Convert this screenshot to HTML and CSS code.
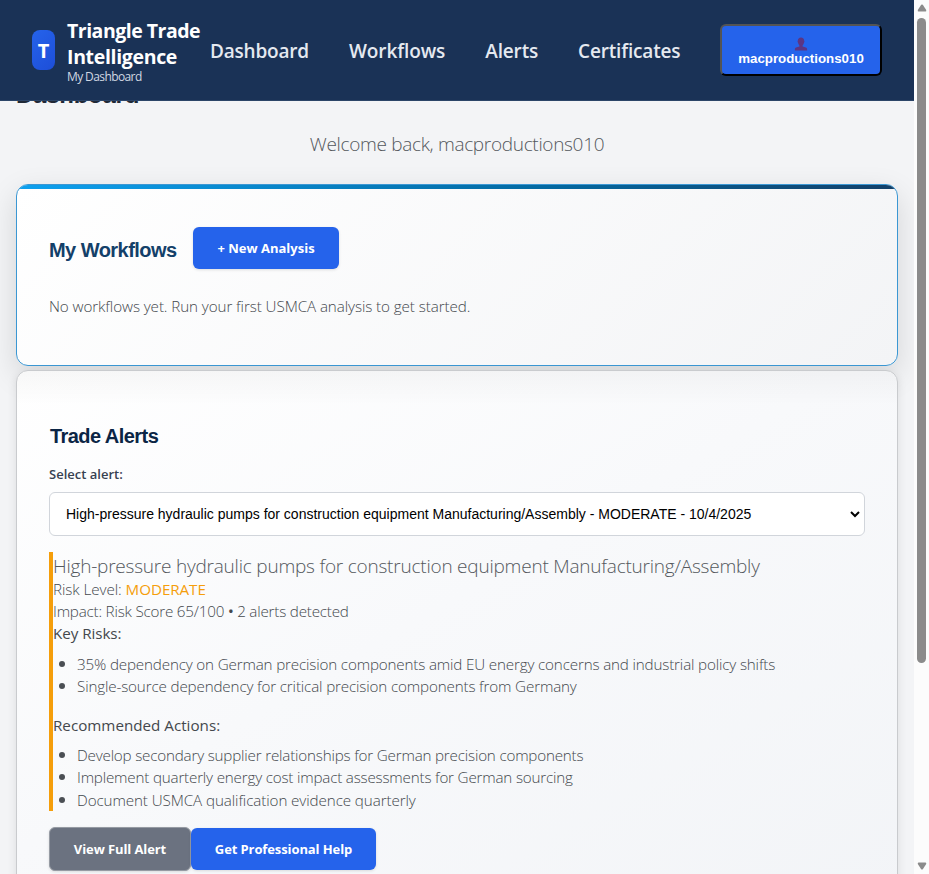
FILE: index.html
```html
<!DOCTYPE html>
<html lang="en">
<head>
<meta charset="utf-8">
<title>Triangle Trade Intelligence</title>
<link rel="stylesheet" href="styles.css">
</head>
<body>
<div class="viewport">
  <div class="page">
    <header class="header">
      <div class="logo">T</div>
      <div class="brand">
        <div class="brand-name"><span class="brand-first">Triangle Trade</span><br><span class="brand-second">Intelligence</span></div>
        <div class="brand-sub">My Dashboard</div>
      </div>
      <nav class="nav">
        <a class="nav-dashboard">Dashboard</a>
        <a class="nav-workflows">Workflows</a>
        <a class="nav-alerts">Alerts</a>
        <a class="nav-certificates">Certificates</a>
      </nav>
      <button class="user">
        <svg class="user-icon" width="14" height="14" viewBox="0 0 14 14"><path d="M7 .5c2 0 3.200 1.300 3.200 3.300l.3.800-.5 1.200C9.700 7 9.300 7.800 8.600 8.400v1.100l3.300 1c.9.300 1.200.9 1.200 1.700v1.300H.9v-1.300c0-.8.300-1.400 1.200-1.700l3.300-1V8.400C4.700 7.800 4.300 7 4 5.800l-.5-1.200.3-.8C3.800 1.800 5 .5 7 .5z" fill="#5c3584"/></svg>
        <span>macproductions010</span>
      </button>
    </header>
    <main class="main">
      <h1 class="title">Dashboard</h1>
      <p class="welcome"><span>Welcome back, macproductions010</span></p>
      <section class="card card-workflows">
        <div class="card-head">
          <h2 class="heading">My Workflows</h2>
          <button class="btn btn-new"><span>+ New Analysis</span></button>
        </div>
        <p class="text empty"><span>No workflows yet. Run your first USMCA analysis to get started.</span></p>
      </section>
      <section class="card card-alerts">
        <h2 class="heading heading-dark">Trade Alerts</h2>
        <label class="label"><span>Select alert:</span></label>
        <div class="select">
          <span>High-pressure hydraulic pumps for construction equipment Manufacturing/Assembly - MODERATE - 10/4/2025</span>
          <svg width="10" height="7" viewBox="0 0 10 7"><path d="M1 1l4 4 4-4" fill="none" stroke="#000" stroke-width="2"/></svg>
        </div>
        <div class="alert">
          <div class="alert-title"><span>High-pressure hydraulic pumps for construction equipment Manufacturing/Assembly</span></div>
          <div class="text t-risk"><span>Risk Level: <b class="moderate">MODERATE</b></span></div>
          <div class="text t-impact"><span>Impact: Risk Score 65/100 <span class="dot">•</span> 2 alerts detected</span></div>
          <div class="text strong t-key"><span>Key Risks:</span></div>
          <ul class="list">
            <li class="l1"><span>35% dependency on German precision components amid EU energy concerns and industrial policy shifts</span></li>
            <li class="l2"><span>Single-source dependency for critical precision components from Germany</span></li>
          </ul>
          <div class="text strong t-rec"><span>Recommended Actions:</span></div>
          <ul class="list list-last">
            <li class="l3"><span>Develop secondary supplier relationships for German precision components</span></li>
            <li class="l4"><span>Implement quarterly energy cost impact assessments for German sourcing</span></li>
            <li class="l5"><span>Document USMCA qualification evidence quarterly</span></li>
          </ul>
        </div>
        <div class="actions">
          <button class="btn btn-view"><span>View Full Alert</span></button>
          <button class="btn btn-help"><span>Get Professional Help</span></button>
        </div>
      </section>
    </main>
  </div>
  <div class="scrollbar">
    <svg width="10" height="8" viewBox="0 0 10 8"><path d="M4.200.800Q5 0 5.800.800L9.200 6Q9.500 7.500 8.500 7.500H1.500Q.5 7.500.8 6z" fill="#8b8b8b"/></svg>
    <div class="thumb"></div>
    <svg class="down" width="10" height="8" viewBox="0 0 10 8"><path d="M4.200 7.200Q5 8 5.800 7.200L9.200 2Q9.500.5 8.500.5H1.500Q.5.5.8 2z" fill="#8b8b8b"/></svg>
  </div>
</div>
</body>
</html>
```

FILE: styles.css
```css
* { box-sizing: border-box; }
body { margin: 0; font-family: "Open Sans", sans-serif; background: #f3f4f6; }
h1, h2, p, ul { margin: 0; padding: 0; }
button { font-family: inherit; }
.viewport { display: flex; width: 929px; height: 874px; overflow: hidden; }
.page { width: 914px; height: 874px; overflow: hidden; background: #f3f4f6; }
.header { position: relative; z-index: 2; display: flex; align-items: center; height: 101px; padding: 0 32px; background: #1a3256; border-bottom: 1px solid #2c4568; white-space: nowrap; }
.logo { width: 23px; height: 40px; border-radius: 8px; background: linear-gradient(135deg, #2563eb, #1d4ed8); color: #fff; font-weight: 700; font-size: 20px; line-height: 42px; text-align: center; }
.brand { width: 143px; margin-left: 12px; }
.brand-name { color: #fff; font-weight: 700; font-size: 19.5px; line-height: 26px; letter-spacing: -0.5px; }
.brand-second { letter-spacing: -0.33px; }
.brand-sub { color: #d1d8e3; font-size: 12px; line-height: 13px; letter-spacing: -0.6px; }
.nav { display: flex; gap: 40px; width: 510px; padding-top: 2px; color: #e5e9f0; font-weight: 600; font-size: 19px; line-height: 28px; }
.nav-dashboard { letter-spacing: -0.2px; }
.nav-workflows { letter-spacing: -0.1px; }
.nav-alerts { letter-spacing: -0.15px; }
.nav-certificates { letter-spacing: -0.17px; }
.user { display: flex; flex-direction: column; align-items: center; justify-content: center; width: 162px; height: 52px; padding: 3px 0 0; border: 2px outset #000; border-radius: 6px; background: #2563eb; color: #fff; font: 700 13.3px/15px "Liberation Sans", sans-serif; }
.user-icon { display: block; }
.main { padding: 0 16px; }
.title { height: 30px; margin-top: -21px; color: #1f2937; font: 700 24px/30px "Liberation Sans", sans-serif; letter-spacing: -0.25px; }
.welcome { margin-top: 19px; height: 30px; color: #54585d; font-weight: 300; font-size: 19px; line-height: 30px; letter-spacing: -0.32px; text-align: center; white-space: nowrap; }
.card { position: relative; width: 882px; border-radius: 12px; padding: 0 32px; background: linear-gradient(135deg, #fff, #f3f4f6); }
.card-workflows { height: 182px; margin-top: 25px; border: 1px solid #3b97d3; padding-top: 42px; overflow: hidden; box-shadow: 0 10px 30px rgba(0,0,0,.13); }
.card-workflows::before { content: ""; position: absolute; left: 0; right: 0; top: 0; height: 4px; background: linear-gradient(90deg, #0ea5f5 -5%, #0369a1 60%, #134069); }
.card-head { display: flex; gap: 16px; align-items: center; height: 42px; }
.heading { width: 128px; padding-top: 4px; color: #134069; font: 700 20px/24px "Liberation Sans", sans-serif; letter-spacing: -0.55px; white-space: nowrap; }
.heading-dark { width: auto; padding-left: 1px; color: #0b2545; }
.btn { height: 42px; padding: 0; border: 0; border-radius: 6px; background: #2563eb; color: #fff; font-weight: 700; font-size: 13px; white-space: nowrap; box-shadow: 0 1px 3px rgba(0,0,0,.12); }
.btn-new { width: 146px; }
.text, .list li { color: #44484d; font-weight: 300; font-size: 15.2px; line-height: 22px; white-space: nowrap; }
.empty { margin-top: 26px; letter-spacing: -0.085px; }
.card-alerts { height: 560px; margin-top: 4px; padding-top: 49px; border: 1px solid #c9cbce; background: linear-gradient(150deg, #fff, #f8f9fb 45%, #f2f4f7); box-shadow: 0 3px 10px rgba(0,0,0,.1); }
.card-alerts::before { content: ""; position: absolute; inset: 0 0 auto; height: 34px; border-radius: 11px 11px 0 0; background: linear-gradient(rgba(0,0,0,.03), transparent); }
.label { display: block; margin-top: 16px; height: 20px; color: #374151; font-weight: 600; font-size: 13px; line-height: 20px; white-space: nowrap; }
.select { display: flex; align-items: center; justify-content: space-between; height: 44px; margin-top: 8px; padding: 0 4px 0 16px; border: 1px solid #d1d5db; border-radius: 6px; background: #fff; color: #000; font: 14px/20px "Liberation Sans", sans-serif; white-space: nowrap; }
.alert { height: 259px; margin-top: 16px; border-left: 4px solid #f59e0b; }
.alert-title { height: 26px; color: #54585d; font-weight: 300; font-size: 19px; line-height: 29px; letter-spacing: -0.215px; white-space: nowrap; }
.moderate { color: #f59e0b; font-weight: 400; }
.text.strong { font-weight: 400; }
.t-risk, .t-key { letter-spacing: -0.06px; }
.t-impact { letter-spacing: -0.2px; }
.dot { font-family: "Noto Sans", sans-serif; font-weight: 400; }
.list { padding-left: 24px; margin: 9px 0 17px; list-style: none; }
.list-last { margin-top: 8px; }
.list li::before { content: ""; float: left; width: 6px; height: 6px; margin: 8px 0 0 -18px; border-radius: 50%; background: #4b4f54; }
.l1 { letter-spacing: -0.16px; }
.l2 { letter-spacing: -0.15px; }
.l3, .l4 { letter-spacing: -0.19px; }
.list .l5 { padding-top: 1px; letter-spacing: -0.095px; }
.actions { display: flex; align-items: center; margin-top: 16px; height: 44px; }
.btn-view { width: 142px; height: 44px; background: #6b7280; border: 1px solid #969ba3; letter-spacing: -0.1px; }
.btn-help { width: 185px; letter-spacing: -0.1px; }
.scrollbar { display: flex; flex-direction: column; align-items: center; width: 15px; height: 874px; padding: 4px 0; background: #fcfcfc; }
.thumb { width: 9px; height: 645px; margin-top: 6px; border-radius: 5px; background: #8b8b8b; }
.down { margin-top: auto; }
```
